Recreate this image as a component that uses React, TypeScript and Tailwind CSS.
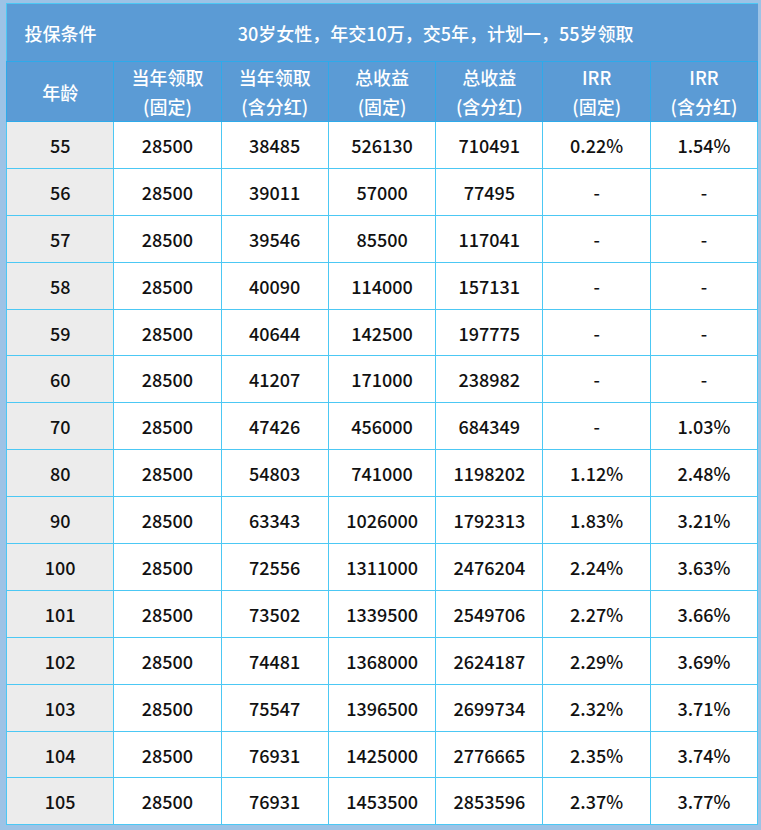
const rows = [
  ["55", "28500", "38485", "526130", "710491", "0.22%", "1.54%"],
  ["56", "28500", "39011", "57000", "77495", "-", "-"],
  ["57", "28500", "39546", "85500", "117041", "-", "-"],
  ["58", "28500", "40090", "114000", "157131", "-", "-"],
  ["59", "28500", "40644", "142500", "197775", "-", "-"],
  ["60", "28500", "41207", "171000", "238982", "-", "-"],
  ["70", "28500", "47426", "456000", "684349", "-", "1.03%"],
  ["80", "28500", "54803", "741000", "1198202", "1.12%", "2.48%"],
  ["90", "28500", "63343", "1026000", "1792313", "1.83%", "3.21%"],
  ["100", "28500", "72556", "1311000", "2476204", "2.24%", "3.63%"],
  ["101", "28500", "73502", "1339500", "2549706", "2.27%", "3.66%"],
  ["102", "28500", "74481", "1368000", "2624187", "2.29%", "3.69%"],
  ["103", "28500", "75547", "1396500", "2699734", "2.32%", "3.71%"],
  ["104", "28500", "76931", "1425000", "2776665", "2.35%", "3.74%"],
  ["105", "28500", "76931", "1453500", "2853596", "2.37%", "3.77%"],
]

const heads = [
  ["当年领取", "(固定)"],
  ["当年领取", "(含分红)"],
  ["总收益", "(固定)"],
  ["总收益", "(含分红)"],
  ["IRR", "(固定)"],
  ["IRR", "(含分红)"],
]

export default function App() {
  return (
    <div
      className="w-[761px] h-[830px] overflow-hidden bg-[#9dc3e6] pt-[3px] pl-[6px]"
      style={{ fontFamily: '"Noto Sans CJK SC", "Noto Sans", sans-serif' }}
    >
      <table className="table-fixed border-collapse w-[751px] text-[18px] leading-[26px]">
        <colgroup>
          {Array.from({ length: 7 }).map((_, i) => (
            <col key={i} className="w-[107.3px]" />
          ))}
        </colgroup>
        <thead>
          <tr className="h-[58px] bg-[#5b9bd5] text-white font-medium border-t border-l border-[#4cc8f4]">
            <th className="font-medium text-center">投保条件</th>
            <th colSpan={6} className="font-medium text-center">
              30岁女性，年交10万，交5年，计划一，55岁领取
            </th>
          </tr>
          <tr className="h-[60px] bg-[#5b9bd5] text-white">
            <th className="font-medium border border-[#2eaaea]">年龄</th>
            {heads.map((h, i) => (
              <th key={i} className="font-medium border border-[#2eaaea] leading-[29px]">
                <div>{h[0]}</div>
                <div>{h[1]}</div>
              </th>
            ))}
          </tr>
        </thead>
        <tbody>
          {rows.map((r) => (
            <tr key={r[0]} className="h-[46.9px]">
              {r.map((c, i) => (
                <td
                  key={i}
                  className={`text-center font-medium text-[#111] border border-[#4cc8f4] ${
                    i === 0 ? "bg-[#ececec]" : "bg-white"
                  }`}
                >
                  {c}
                </td>
              ))}
            </tr>
          ))}
        </tbody>
      </table>
    </div>
  )
}
